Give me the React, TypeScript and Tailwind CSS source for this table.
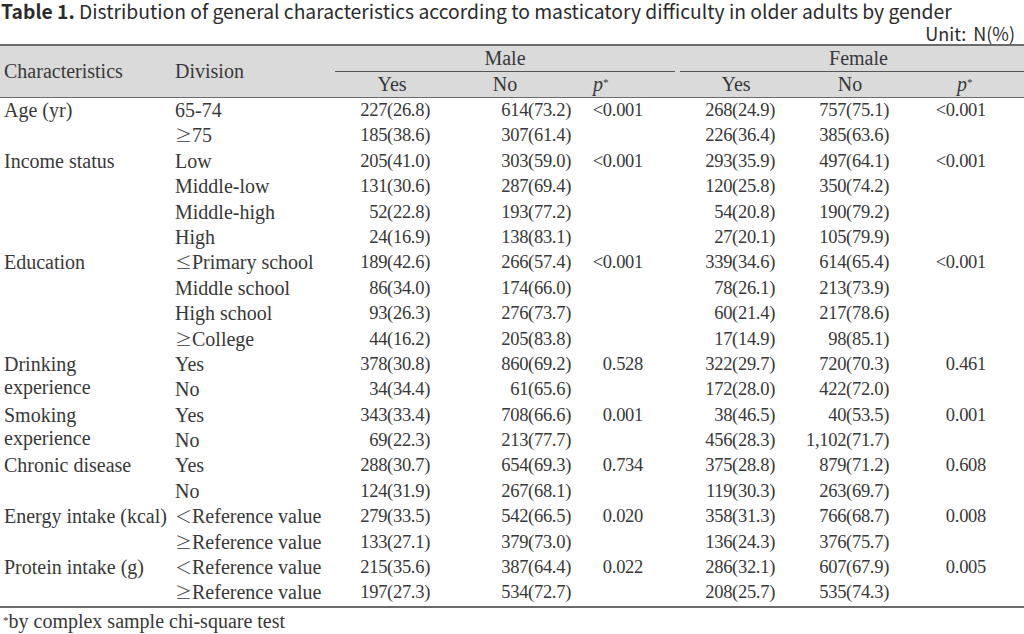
import React from 'react';

type Row = {
  label?: string[];
  span?: number;
  division: React.ReactNode;
  m: [string, string, string?];
  f: [string, string, string?];
};

// symbols in the reference come from a CJK font, so they are wider
const Sym = ({ c }: { c: string }) => (
  <span className="font-['Noto_Sans_CJK_KR',sans-serif] text-[17px] font-light">{c}</span>
);

const rows: Row[] = [
  { label: ['Age (yr)'], span: 2, division: '65-74', m: ['227(26.8)', '614(73.2)', '<0.001'], f: ['268(24.9)', '757(75.1)', '<0.001'] },
  { division: <><Sym c="≥" />75</>, m: ['185(38.6)', '307(61.4)'], f: ['226(36.4)', '385(63.6)'] },
  { label: ['Income status'], span: 4, division: 'Low', m: ['205(41.0)', '303(59.0)', '<0.001'], f: ['293(35.9)', '497(64.1)', '<0.001'] },
  { division: 'Middle-low', m: ['131(30.6)', '287(69.4)'], f: ['120(25.8)', '350(74.2)'] },
  { division: 'Middle-high', m: ['52(22.8)', '193(77.2)'], f: ['54(20.8)', '190(79.2)'] },
  { division: 'High', m: ['24(16.9)', '138(83.1)'], f: ['27(20.1)', '105(79.9)'] },
  { label: ['Education'], span: 4, division: <><Sym c="≤" />Primary school</>, m: ['189(42.6)', '266(57.4)', '<0.001'], f: ['339(34.6)', '614(65.4)', '<0.001'] },
  { division: 'Middle school', m: ['86(34.0)', '174(66.0)'], f: ['78(26.1)', '213(73.9)'] },
  { division: 'High school', m: ['93(26.3)', '276(73.7)'], f: ['60(21.4)', '217(78.6)'] },
  { division: <><Sym c="≥" />College</>, m: ['44(16.2)', '205(83.8)'], f: ['17(14.9)', '98(85.1)'] },
  { label: ['Drinking', 'experience'], span: 2, division: 'Yes', m: ['378(30.8)', '860(69.2)', '0.528'], f: ['322(29.7)', '720(70.3)', '0.461'] },
  { division: 'No', m: ['34(34.4)', '61(65.6)'], f: ['172(28.0)', '422(72.0)'] },
  { label: ['Smoking', 'experience'], span: 2, division: 'Yes', m: ['343(33.4)', '708(66.6)', '0.001'], f: ['38(46.5)', '40(53.5)', '0.001'] },
  { division: 'No', m: ['69(22.3)', '213(77.7)'], f: ['456(28.3)', '1,102(71.7)'] },
  { label: ['Chronic disease'], span: 2, division: 'Yes', m: ['288(30.7)', '654(69.3)', '0.734'], f: ['375(28.8)', '879(71.2)', '0.608'] },
  { division: 'No', m: ['124(31.9)', '267(68.1)'], f: ['119(30.3)', '263(69.7)'] },
  { label: ['Energy intake (kcal)'], span: 2, division: <><Sym c="＜" />Reference value</>, m: ['279(33.5)', '542(66.5)', '0.020'], f: ['358(31.3)', '766(68.7)', '0.008'] },
  { division: <><Sym c="≥" />Reference value</>, m: ['133(27.1)', '379(73.0)'], f: ['136(24.3)', '376(75.7)'] },
  { label: ['Protein intake (g)'], span: 2, division: <><Sym c="＜" />Reference value</>, m: ['215(35.6)', '387(64.4)', '0.022'], f: ['286(32.1)', '607(67.9)', '0.005'] },
  { division: <><Sym c="≥" />Reference value</>, m: ['197(27.3)', '534(72.7)'], f: ['208(25.7)', '535(74.3)'] },
];

const rowSpanClass: Record<number, string> = {
  2: 'row-span-2',
  4: 'row-span-4',
};

const PStar = () => (
  <span className="text-[20px] italic">
    p<sup className="relative -top-[5px] text-[11px] not-italic">*</sup>
  </span>
);

const cols = 'grid grid-cols-[170px_165px_105px_135px_102px_113px_110px_124px]';

export default function App() {
  return (
    <div className="h-[634px] w-[1024px] overflow-hidden bg-white text-[#383838]">
      <div className="pl-[1px] font-['Noto_Sans_CJK_KR','Noto_Sans',sans-serif] text-[19.3px] leading-[22px] text-[#2b2b2b]">
        <span className="font-bold">Table 1.</span> Distribution of general characteristics according to masticatory difficulty in older adults by gender
      </div>
      <div className="pr-[9px] text-right font-['Noto_Sans_CJK_KR','Noto_Sans',sans-serif] text-[18px] leading-[22px] text-[#2b2b2b]">
        Unit:<span className="ml-[7px]">N(%)</span>
      </div>

      <div className="font-['Liberation_Serif',serif] text-[18.5px]">
        {/* header */}
        <div className={`${cols} border-y-2 border-[#6b6b6b] border-b bg-[#dadada] text-[20px] leading-[25px]`}>
          <div className="row-span-2 flex items-center pl-[4px]">Characteristics</div>
          <div className="row-span-2 flex items-center pl-[5px]">Division</div>
          <div className="col-span-3 text-center">
            <div className="mr-[2px] border-b border-[#555]">Male</div>
          </div>
          <div className="col-span-3">
            <div className="ml-[3px] border-b border-[#555] pl-[13px] text-center">Female</div>
          </div>
          <div className="pl-[9px] text-center">Yes</div>
          <div className="pr-[5px] text-center">No</div>
          <div className="pl-[18px]"><PStar /></div>
          <div className="pl-[5px] text-center">Yes</div>
          <div className="pl-[10px] text-center">No</div>
          <div className="pl-[57px]"><PStar /></div>
        </div>

        {/* body */}
        <div className={`${cols} auto-rows-[25.4px] border-b-2 border-[#6b6b6b] leading-[24px]`}>
          {rows.map((r, i) => (
            <React.Fragment key={i}>
              {r.label && (
                <div className={`${rowSpanClass[r.span ?? 2]} pl-[4px] text-[20px]`}>
                  {r.label.map((l, j) => (
                    <div key={l} className={j > 0 ? 'leading-[23px]' : ''}>{l}</div>
                  ))}
                </div>
              )}
              <div className="whitespace-nowrap pl-[5px] text-[20px]">{r.division}</div>
              <div className="pr-[10px] text-right tracking-[-0.3px]">{r.m[0]}</div>
              <div className="pr-[4px] text-right tracking-[-0.3px]">{r.m[1]}</div>
              <div className="pr-[34px] text-right tracking-[-0.3px]">{r.m[2] ?? ''}</div>
              <div className="pr-[15px] text-right tracking-[-0.3px]">{r.f[0]}</div>
              <div className="pr-[11px] text-right tracking-[-0.3px]">{r.f[1]}</div>
              <div className="pr-[38px] text-right tracking-[-0.3px]">{r.f[2] ?? ''}</div>
            </React.Fragment>
          ))}
        </div>

        <div className="pl-[3px] text-[20px] leading-[26px]">
          <sup className="relative -top-[4px] text-[11px]">*</sup>by complex sample chi-square test
        </div>
      </div>
    </div>
  );
}
